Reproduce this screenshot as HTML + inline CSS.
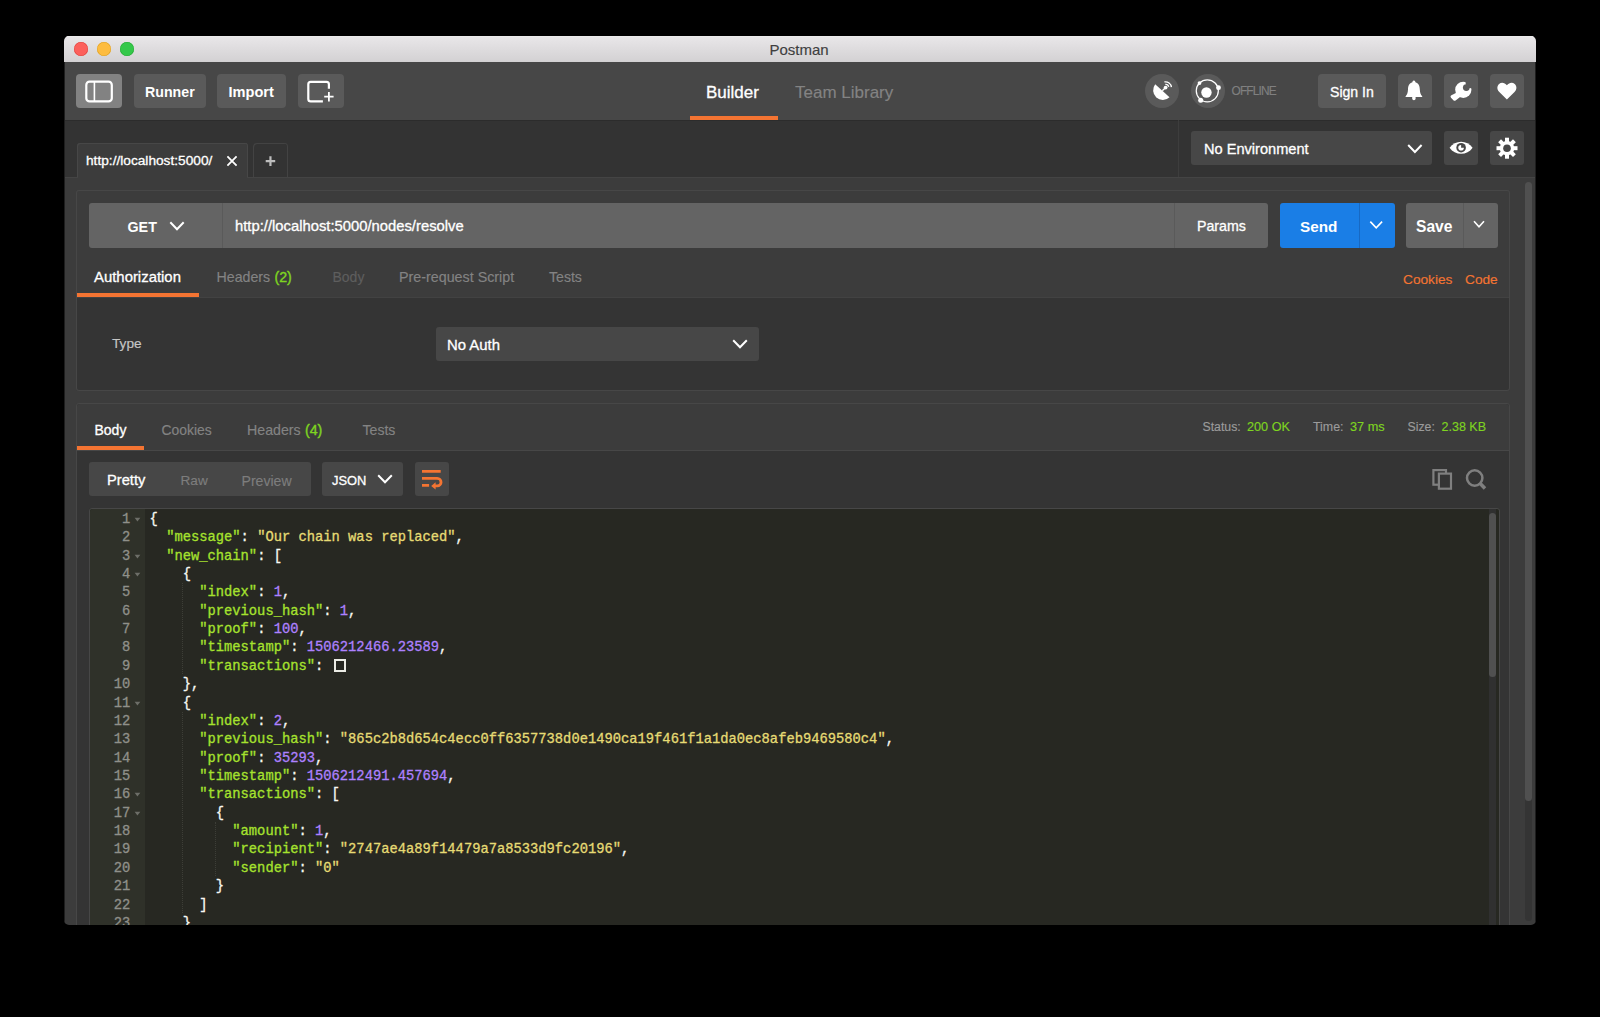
<!DOCTYPE html><html><head><meta charset="utf-8"><title>Postman</title><style>
html,body{margin:0;padding:0;background:#000;width:1600px;height:1017px;overflow:hidden;}
body{font-family:"Liberation Sans", sans-serif;}
#win{position:absolute;left:0;top:0;width:1600px;height:1017px;clip-path:inset(36px 64px 92px 64px round 5px);}
.a{position:absolute;display:block;}
.t{position:absolute;white-space:nowrap;line-height:1;}
.code{position:absolute;left:0;top:0;font-family:"Liberation Mono", monospace;font-size:13.79px;white-space:pre;-webkit-text-stroke-width:0.3px;}
</style></head><body><div id="win">
<div class="a" style="left:64px;top:36px;width:1472px;height:26px;background:linear-gradient(#e9e7e9,#d3d1d3);"></div>
<div class="a" style="left:64px;top:36px;width:1472px;height:1px;background:#ecebec;"></div>
<div class="a" style="left:73.8px;top:42.3px;width:14px;height:14px;border-radius:50%;background:#fc605c;box-shadow:inset 0 0 0 0.5px #e0443e;"></div>
<div class="a" style="left:96.5px;top:42.3px;width:14px;height:14px;border-radius:50%;background:#fdbc40;box-shadow:inset 0 0 0 0.5px #dea123;"></div>
<div class="a" style="left:119.7px;top:42.3px;width:14px;height:14px;border-radius:50%;background:#34c84a;box-shadow:inset 0 0 0 0.5px #27aa35;"></div>
<div class="t" style="left:769.5px;top:42.10px;font-size:15px;color:#3f3f3f;-webkit-text-stroke-width:0.15px;">Postman</div>
<div class="a" style="left:64px;top:62px;width:1472px;height:58px;background:#474747;"></div>
<div class="a" style="left:76px;top:74px;width:46px;height:34px;background:#828282;border-radius:4px;"></div>
<svg class="a" style="left:76px;top:74px;" width="46" height="34" viewBox="76 74 46 34"><rect x="86.3" y="81.7" width="25.5" height="19.7" rx="3.2" fill="none" stroke="#fff" stroke-width="2.2"/><line x1="94.4" y1="82" x2="94.4" y2="101" stroke="#fff" stroke-width="1.6"/></svg>
<div class="a" style="left:134px;top:74px;width:72px;height:34px;background:#5a5a5a;border-radius:4px;"></div>
<div class="t" style="left:145px;top:84.98px;font-size:14.2px;color:#fff;font-weight:700;">Runner</div>
<div class="a" style="left:217px;top:74px;width:69px;height:34px;background:#5a5a5a;border-radius:4px;"></div>
<div class="t" style="left:228.5px;top:84.64px;font-size:14.6px;color:#fff;font-weight:700;">Import</div>
<div class="a" style="left:298px;top:74px;width:46px;height:34px;background:#5a5a5a;border-radius:4px;"></div>
<svg class="a" style="left:298px;top:74px;" width="46" height="34" viewBox="298 74 46 34"><path d="M328.9 88.8 V84.3 A2.4 2.4 0 0 0 326.5 81.9 H310.7 A2.4 2.4 0 0 0 308.3 84.3 V98.9 A2.4 2.4 0 0 0 310.7 101.3 H322.9" fill="none" stroke="#fff" stroke-width="2.2"/><path d="M324.2 96.7 H333.6 M328.9 92 V101.4" stroke="#fff" stroke-width="1.8"/></svg>
<div class="t" style="left:706px;top:83.61px;font-size:17px;color:#fff;-webkit-text-stroke-width:0.3px;">Builder</div>
<div class="a" style="left:690px;top:116px;width:88px;height:4px;background:#f47432;"></div>
<div class="t" style="left:795px;top:83.61px;font-size:17px;color:#838383;-webkit-text-stroke-width:0.15px;">Team Library</div>
<div class="a" style="left:1145px;top:74px;width:34px;height:34px;border-radius:50%;background:#5a5a5a;"></div>
<svg class="a" style="left:1145px;top:74px;" width="34" height="34" viewBox="1145 74 34 34"><path d="M1155.2 84.3 L1169.5 97.2 A9.65 9.65 0 0 1 1155.2 84.3 Z" fill="#fff"/>
<path d="M1162.3 90.8 L1165.6 87.6" stroke="#fff" stroke-width="1.4"/><circle cx="1165.6" cy="87.6" r="1.9" fill="#fff"/>
<path d="M1165.31 84.31 A3.3 3.3 0 0 1 1168.79 86.75" fill="none" stroke="#fff" stroke-width="1.3"/>
<path d="M1164.39 81.93 A5.8 5.8 0 0 1 1171.38 87.09" fill="none" stroke="#fff" stroke-width="1.3"/></svg>
<div class="a" style="left:1191px;top:74px;width:34px;height:34px;border-radius:50%;background:#5a5a5a;"></div>
<svg class="a" style="left:1191px;top:74px;" width="34" height="34" viewBox="1191 74 34 34"><circle cx="1207.3" cy="90.8" r="11.05" fill="none" stroke="#fff" stroke-width="1.25"/>
<circle cx="1206.45" cy="92.5" r="5.2" fill="#fff"/><circle cx="1199.5" cy="83.1" r="1.9" fill="#fff"/>
<circle cx="1218.5" cy="87.7" r="2.4" fill="#fff"/><circle cx="1200.7" cy="100.3" r="2.5" fill="#fff"/></svg>
<div class="t" style="left:1231.5px;top:86.42px;font-size:11.9px;color:#808080;-webkit-text-stroke-width:0.15px;letter-spacing:-0.85px;">OFFLINE</div>
<div class="a" style="left:1318px;top:74px;width:68px;height:34px;background:#5a5a5a;border-radius:4px;"></div>
<div class="t" style="left:1330px;top:85.06px;font-size:14.1px;color:#fff;-webkit-text-stroke-width:0.3px;">Sign In</div>
<div class="a" style="left:1398px;top:74px;width:34px;height:34px;background:#5a5a5a;border-radius:4px;"></div>
<svg class="a" style="left:1398px;top:74px;" width="34" height="34" viewBox="1398 74 34 34"><path d="M1413.9 80.6 C1415.2 80.6 1415.3 81.8 1415.4 82.3 C1418.6 83.2 1419.6 85.8 1419.8 89.2 C1420 93 1420.6 94.6 1422.2 96.2 L1422.2 97 L1405.6 97 L1405.6 96.2 C1407.2 94.6 1407.8 93 1408 89.2 C1408.2 85.8 1409.2 83.2 1412.4 82.3 C1412.5 81.8 1412.6 80.6 1413.9 80.6 Z" fill="#fff"/>
<path d="M1412.2 97 L1415.6 97 L1415.6 98.6 A1.7 1.7 0 0 1 1412.2 98.6 Z" fill="#fff"/></svg>
<div class="a" style="left:1444px;top:74px;width:34px;height:34px;background:#5a5a5a;border-radius:4px;"></div>
<svg class="a" style="left:1444px;top:74px;" width="34" height="34" viewBox="1444 74 34 34"><defs><mask id="wm" maskUnits="userSpaceOnUse" x="1444" y="74" width="34" height="34"><rect x="1444" y="74" width="34" height="34" fill="#fff"/><circle cx="1466.3" cy="87.6" r="3.4" fill="#000"/><path d="M1466.3 87.6 L1464.6 76 L1480 76 L1480 89.6 Z" fill="#000"/></mask></defs>
<g mask="url(#wm)"><circle cx="1463.3" cy="89.8" r="8.1" fill="#fff"/></g>
<path d="M1460.2 90.8 L1463.6 94.2 L1455.6 100.4 A1.6 1.6 0 0 1 1453.4 100.2 L1451 97.8 A1.6 1.6 0 0 1 1451 95.6 Z" fill="#fff"/></svg>
<div class="a" style="left:1490px;top:74px;width:34px;height:34px;background:#5a5a5a;border-radius:4px;"></div>
<svg class="a" style="left:1490px;top:74px;" width="34" height="34" viewBox="1490 74 34 34"><path d="M1506.9 99.6 L1499.3 92 C1496.6 89.3 1496.9 85.7 1499.1 83.9 C1501.4 82 1504.8 82.5 1506.9 85.3 C1509 82.5 1512.4 82 1514.7 83.9 C1516.9 85.7 1517.2 89.3 1514.5 92 Z" fill="#fff"/></svg>
<div class="a" style="left:64px;top:120px;width:1472px;height:57px;background:#333333;"></div>
<div class="a" style="left:64px;top:120px;width:1472px;height:1px;background:#2c2c2c;"></div>
<div class="a" style="left:77px;top:143px;width:171px;height:35px;background:#3c3c3c;border-radius:3px 3px 0 0;box-shadow:inset 1px 1px 0 #474747, inset -1px 0 0 #474747;"></div>
<div class="t" style="left:86px;top:154.10px;font-size:13.7px;color:#fff;-webkit-text-stroke-width:0.3px;">http://localhost:5000/</div>
<svg class="a" style="left:225px;top:154px;" width="14" height="14" viewBox="225 154 14 14"><path d="M227.4 156.4 L236.6 165.6 M236.6 156.4 L227.4 165.6" stroke="#fff" stroke-width="1.8"/></svg>
<div class="a" style="left:253px;top:143px;width:35px;height:35px;background:#333333;border-radius:4px 4px 0 0;box-shadow:inset 1px 1px 0 #434343, inset -1px 0 0 #434343;"></div>
<svg class="a" style="left:262px;top:153px;" width="16" height="16" viewBox="262 153 16 16"><path d="M265.7 161.1 H275.2 M270.45 156.3 V165.9" stroke="#bdbdbd" stroke-width="2.2"/></svg>
<div class="a" style="left:1178px;top:120px;width:1px;height:57px;background:#3d3d3d;"></div>
<div class="a" style="left:1191px;top:131px;width:241px;height:34px;background:#474747;border-radius:3px;"></div>
<div class="t" style="left:1204px;top:141.64px;font-size:14.6px;color:#fff;-webkit-text-stroke-width:0.3px;">No Environment</div>
<svg class="a" style="left:1405px;top:142px;" width="20" height="14" viewBox="1405 142 20 14"><path d="M1408.2 145 L1414.9 152 L1421.6 145" fill="none" stroke="#fff" stroke-width="2"/></svg>
<div class="a" style="left:1444px;top:131px;width:34px;height:34px;background:#474747;border-radius:3px;"></div>
<svg class="a" style="left:1444px;top:131px;" width="34" height="34" viewBox="1444 131 34 34"><path d="M1449.6 147.7 C1455 139.6 1467.2 139.6 1472.6 147.7 C1467.2 155.8 1455 155.8 1449.6 147.7 Z" fill="#fff"/>
<circle cx="1461.1" cy="147.7" r="4.8" fill="#474747"/><circle cx="1461.1" cy="147.7" r="2.8" fill="#fff"/>
<path d="M1461.1 147.7 V144.6 A3.1 3.1 0 0 1 1464.2 147.7 Z" fill="#474747"/></svg>
<div class="a" style="left:1490px;top:131px;width:34px;height:34px;background:#474747;border-radius:3px;"></div>
<svg class="a" style="left:1490px;top:131px;" width="34" height="34" viewBox="1490 131 34 34"><rect x="1505.0" y="137.7" width="4.0" height="10.5" fill="#fff" transform="rotate(0.0 1507 148.2)"/><rect x="1505.0" y="137.7" width="4.0" height="10.5" fill="#fff" transform="rotate(45.0 1507 148.2)"/><rect x="1505.0" y="137.7" width="4.0" height="10.5" fill="#fff" transform="rotate(90.0 1507 148.2)"/><rect x="1505.0" y="137.7" width="4.0" height="10.5" fill="#fff" transform="rotate(135.0 1507 148.2)"/><rect x="1505.0" y="137.7" width="4.0" height="10.5" fill="#fff" transform="rotate(180.0 1507 148.2)"/><rect x="1505.0" y="137.7" width="4.0" height="10.5" fill="#fff" transform="rotate(225.0 1507 148.2)"/><rect x="1505.0" y="137.7" width="4.0" height="10.5" fill="#fff" transform="rotate(270.0 1507 148.2)"/><rect x="1505.0" y="137.7" width="4.0" height="10.5" fill="#fff" transform="rotate(315.0 1507 148.2)"/><circle cx="1507" cy="148.2" r="7.3" fill="#fff"/><circle cx="1507" cy="148.2" r="3.8" fill="#474747"/></svg>
<div class="a" style="left:64px;top:177px;width:1472px;height:748px;background:#3c3c3c;"></div>
<div class="a" style="left:64px;top:177px;width:1472px;height:1px;background:#444444;"></div>
<div class="a" style="left:78px;top:177px;width:169px;height:1px;background:#3c3c3c;"></div>
<div class="a" style="left:1525px;top:700px;width:7px;height:221px;background:#343434;border-radius:3.5px;"></div>
<div class="a" style="left:1525px;top:182px;width:7px;height:619px;background:#505050;border-radius:3.5px;"></div>
<div class="a" style="left:76px;top:190px;width:1434px;height:201px;background:#3c3c3c;border-radius:3px;box-shadow:inset 0 0 0 1px #474747;"></div>
<div class="a" style="left:89px;top:203px;width:1179px;height:45px;background:#646464;border-radius:3px;"></div>
<div class="a" style="left:222px;top:203px;width:1px;height:45px;background:#5a5a5a;"></div>
<div class="a" style="left:1174px;top:203px;width:1px;height:45px;background:#5a5a5a;"></div>
<div class="t" style="left:127.5px;top:219.89px;font-size:14.3px;color:#fff;font-weight:700;">GET</div>
<svg class="a" style="left:166px;top:218px;" width="22" height="16" viewBox="166 218 22 16"><path d="M170.3 222.2 L177 229.2 L183.7 222.2" fill="none" stroke="#fff" stroke-width="2"/></svg>
<div class="t" style="left:235px;top:219.27px;font-size:14.8px;color:#fff;-webkit-text-stroke-width:0.3px;">http://localhost:5000/nodes/resolve</div>
<div class="t" style="left:1197px;top:219.48px;font-size:14.2px;color:#fff;-webkit-text-stroke-width:0.3px;">Params</div>
<div class="a" style="left:1280px;top:203px;width:115px;height:45px;background:#1a7ee6;border-radius:3px;"></div>
<div class="a" style="left:1359px;top:203px;width:1px;height:45px;background:#1769c4;"></div>
<div class="t" style="left:1300px;top:219.25px;font-size:15.3px;color:#fff;font-weight:700;">Send</div>
<svg class="a" style="left:1366px;top:216px;" width="20" height="16" viewBox="1366 216 20 16"><path d="M1370.3 221.6 L1376.2 227.8 L1382.1 221.6" fill="none" stroke="#fff" stroke-width="1.6"/></svg>
<div class="a" style="left:1406px;top:203px;width:92px;height:45px;background:#646464;border-radius:3px;"></div>
<div class="a" style="left:1463px;top:203px;width:1px;height:45px;background:#5a5a5a;"></div>
<div class="t" style="left:1416px;top:218.99px;font-size:15.6px;color:#fff;font-weight:700;">Save</div>
<svg class="a" style="left:1469px;top:216px;" width="20" height="16" viewBox="1469 216 20 16"><path d="M1474 221.2 L1479 226.8 L1484 221.2" fill="none" stroke="#fff" stroke-width="1.6"/></svg>
<div class="t" style="left:94px;top:270.18px;font-size:14.9px;color:#fff;-webkit-text-stroke-width:0.3px;">Authorization</div>
<div class="a" style="left:77px;top:293px;width:122px;height:4px;background:#f47432;"></div>
<div class="t" style="left:216.5px;top:269.98px;font-size:14.2px;color:#838383;-webkit-text-stroke-width:0.15px;">Headers</div>
<div class="t" style="left:274.5px;top:269.98px;font-size:14.2px;color:#7ed321;-webkit-text-stroke-width:0.4px;">(2)</div>
<div class="t" style="left:332.5px;top:270.15px;font-size:14.0px;color:#5e5e5e;-webkit-text-stroke-width:0.15px;">Body</div>
<div class="t" style="left:399px;top:269.89px;font-size:14.3px;color:#838383;-webkit-text-stroke-width:0.15px;">Pre-request Script</div>
<div class="t" style="left:549px;top:270.06px;font-size:14.1px;color:#838383;-webkit-text-stroke-width:0.15px;">Tests</div>
<div class="t" style="left:1403px;top:273.40px;font-size:13.7px;color:#f47432;-webkit-text-stroke-width:0.15px;">Cookies</div>
<div class="t" style="left:1465px;top:273.40px;font-size:13.7px;color:#f47432;-webkit-text-stroke-width:0.15px;">Code</div>
<div class="a" style="left:76px;top:297px;width:1434px;height:94px;background:#343434;border-radius:0 0 3px 3px;box-shadow:inset 0 0 0 1px #474747;"></div>
<div class="a" style="left:77px;top:297px;width:1432px;height:1px;background:#424242;"></div>
<div class="t" style="left:112px;top:336.60px;font-size:13.7px;color:#c6c6c6;-webkit-text-stroke-width:0.15px;">Type</div>
<div class="a" style="left:436px;top:327px;width:323px;height:34px;background:#474747;border-radius:3px;"></div>
<div class="t" style="left:447px;top:337.68px;font-size:14.9px;color:#fff;-webkit-text-stroke-width:0.3px;">No Auth</div>
<svg class="a" style="left:729px;top:336px;" width="22" height="16" viewBox="729 336 22 16"><path d="M733.2 340.2 L740 347.2 L746.8 340.2" fill="none" stroke="#fff" stroke-width="2"/></svg>
<div class="a" style="left:76px;top:403px;width:1434px;height:537px;background:#343434;border-radius:3px;box-shadow:inset 0 0 0 1px #474747;"></div>
<div class="a" style="left:77px;top:404px;width:1432px;height:46px;background:#3c3c3c;border-radius:3px 3px 0 0;"></div>
<div class="a" style="left:77px;top:450px;width:1432px;height:1px;background:#474747;"></div>
<div class="t" style="left:94.5px;top:422.95px;font-size:14.0px;color:#fff;-webkit-text-stroke-width:0.3px;">Body</div>
<div class="a" style="left:77px;top:446px;width:67px;height:4px;background:#f47432;"></div>
<div class="t" style="left:161.5px;top:423.63px;font-size:13.9px;color:#838383;-webkit-text-stroke-width:0.15px;">Cookies</div>
<div class="t" style="left:247px;top:423.38px;font-size:14.2px;color:#838383;-webkit-text-stroke-width:0.15px;">Headers</div>
<div class="t" style="left:305px;top:423.38px;font-size:14.2px;color:#7ed321;-webkit-text-stroke-width:0.4px;">(4)</div>
<div class="t" style="left:362.5px;top:423.46px;font-size:14.1px;color:#838383;-webkit-text-stroke-width:0.15px;">Tests</div>
<div class="t" style="left:1202.5px;top:421.29px;font-size:12.3px;color:#9b9b9b;-webkit-text-stroke-width:0.15px;">Status:</div>
<div class="t" style="left:1247px;top:420.95px;font-size:12.7px;color:#7ed321;-webkit-text-stroke-width:0.15px;">200 OK</div>
<div class="t" style="left:1313px;top:421.20px;font-size:12.4px;color:#9b9b9b;-webkit-text-stroke-width:0.15px;">Time:</div>
<div class="t" style="left:1350px;top:420.95px;font-size:12.7px;color:#7ed321;-webkit-text-stroke-width:0.15px;">37 ms</div>
<div class="t" style="left:1407.5px;top:421.29px;font-size:12.3px;color:#9b9b9b;-webkit-text-stroke-width:0.15px;">Size:</div>
<div class="t" style="left:1441.5px;top:421.12px;font-size:12.5px;color:#7ed321;-webkit-text-stroke-width:0.15px;">2.38 KB</div>
<div class="a" style="left:89px;top:462px;width:222px;height:34px;background:#474747;border-radius:3px;"></div>
<div class="t" style="left:107px;top:473.15px;font-size:14.7px;color:#fff;-webkit-text-stroke-width:0.3px;">Pretty</div>
<div class="t" style="left:180.5px;top:474.08px;font-size:13.6px;color:#7d7d7d;-webkit-text-stroke-width:0.15px;">Raw</div>
<div class="t" style="left:241.5px;top:473.66px;font-size:14.1px;color:#7d7d7d;-webkit-text-stroke-width:0.15px;">Preview</div>
<div class="a" style="left:322px;top:462px;width:81px;height:34px;background:#474747;border-radius:3px;"></div>
<div class="t" style="left:332px;top:474.68px;font-size:12.9px;color:#fff;-webkit-text-stroke-width:0.3px;">JSON</div>
<svg class="a" style="left:374px;top:471px;" width="22" height="16" viewBox="374 471 22 16"><path d="M378.2 475.2 L385 482.2 L391.8 475.2" fill="none" stroke="#fff" stroke-width="2"/></svg>
<div class="a" style="left:415px;top:462px;width:34px;height:34px;background:#474747;border-radius:3px;"></div>
<svg class="a" style="left:415px;top:462px;" width="34" height="34" viewBox="415 462 34 34"><path d="M422 471.3 H440.7 M422 478.4 H437.3 A3.75 3.75 0 0 1 437.3 485.9 H434 M422 485.4 H429.1" fill="none" stroke="#f47432" stroke-width="2.8"/>
<path d="M431.2 485.9 L435.6 482.2 L435.6 489.6 Z" fill="#f47432"/></svg>
<svg class="a" style="left:1430px;top:467px;" width="26" height="26" viewBox="1430 467 26 26"><rect x="1433.4" y="470.1" width="12.6" height="14.6" fill="none" stroke="#7f7f7f" stroke-width="2.2"/>
<rect x="1438.9" y="473.6" width="12.1" height="15.1" fill="#343434" stroke="#7f7f7f" stroke-width="2.2"/></svg>
<svg class="a" style="left:1462px;top:466px;" width="28" height="28" viewBox="1462 466 28 28"><circle cx="1474.7" cy="478" r="7.7" fill="none" stroke="#7f7f7f" stroke-width="2.5"/>
<path d="M1480.2 483.6 L1485 488.4" stroke="#7f7f7f" stroke-width="3.6"/></svg>
<div class="a" style="left:89px;top:508px;width:1411px;height:432px;background:#272822;border-radius:3px;box-shadow:inset 0 0 0 1px #474747;"></div>
<div class="a" style="left:90px;top:509px;width:55px;height:431px;background:#2f3129;border-radius:3px 0 0 0;"></div>
<div class="a" style="left:1489px;top:509px;width:7px;height:416px;background:#303030;"></div>
<div class="a" style="left:1489px;top:513px;width:7px;height:164px;background:#505050;border-radius:3.5px;"></div>
<div class="a" style="left:64px;top:62px;width:1px;height:863px;background:#1e1e1e;"></div>
<div class="a" style="left:1535px;top:62px;width:1px;height:863px;background:#1e1e1e;"></div>
<div class="a" style="left:89px;top:508px;width:1400px;height:417px;overflow:hidden;">
<div class="a" style="left:92.7px;top:74.9px;width:0;height:91.4px;border-left:1px dotted #3d3e37;"></div>
<div class="a" style="left:92.7px;top:203.5px;width:0;height:201.6px;border-left:1px dotted #3d3e37;"></div>
<div class="a" style="left:125.8px;top:313.6px;width:0;height:54.7px;border-left:1px dotted #3d3e37;"></div>
<div class="code" style="left:60.60px;top:3.94px;font-size:13.79px;color:#f8f8f2;">{</div>
<div class="code" style="left:32.92px;top:3.94px;font-size:13.79px;color:#8f908a;">1</div>
<svg class="a" style="left:45px;top:9.0px" width="7" height="5" viewBox="0 0 7 5"><path d="M0.6 0.8 H6.3 L3.45 4.4 Z" fill="#6d6e68"/></svg>
<div class="code" style="left:60.60px;top:22.30px;font-size:13.79px;color:#f8f8f2;">  <span style="color:#a6e22e">"message"</span>: <span style="color:#e6db74">"Our chain was replaced"</span>,</div>
<div class="code" style="left:32.92px;top:22.30px;font-size:13.79px;color:#8f908a;">2</div>
<div class="code" style="left:60.60px;top:40.66px;font-size:13.79px;color:#f8f8f2;">  <span style="color:#a6e22e">"new_chain"</span>: [</div>
<div class="code" style="left:32.92px;top:40.66px;font-size:13.79px;color:#8f908a;">3</div>
<svg class="a" style="left:45px;top:45.7px" width="7" height="5" viewBox="0 0 7 5"><path d="M0.6 0.8 H6.3 L3.45 4.4 Z" fill="#6d6e68"/></svg>
<div class="code" style="left:60.60px;top:59.02px;font-size:13.79px;color:#f8f8f2;">    {</div>
<div class="code" style="left:32.92px;top:59.02px;font-size:13.79px;color:#8f908a;">4</div>
<svg class="a" style="left:45px;top:64.1px" width="7" height="5" viewBox="0 0 7 5"><path d="M0.6 0.8 H6.3 L3.45 4.4 Z" fill="#6d6e68"/></svg>
<div class="code" style="left:60.60px;top:77.38px;font-size:13.79px;color:#f8f8f2;">      <span style="color:#a6e22e">"index"</span>: <span style="color:#ae81ff">1</span>,</div>
<div class="code" style="left:32.92px;top:77.38px;font-size:13.79px;color:#8f908a;">5</div>
<div class="code" style="left:60.60px;top:95.74px;font-size:13.79px;color:#f8f8f2;">      <span style="color:#a6e22e">"previous_hash"</span>: <span style="color:#ae81ff">1</span>,</div>
<div class="code" style="left:32.92px;top:95.74px;font-size:13.79px;color:#8f908a;">6</div>
<div class="code" style="left:60.60px;top:114.10px;font-size:13.79px;color:#f8f8f2;">      <span style="color:#a6e22e">"proof"</span>: <span style="color:#ae81ff">100</span>,</div>
<div class="code" style="left:32.92px;top:114.10px;font-size:13.79px;color:#8f908a;">7</div>
<div class="code" style="left:60.60px;top:132.46px;font-size:13.79px;color:#f8f8f2;">      <span style="color:#a6e22e">"timestamp"</span>: <span style="color:#ae81ff">1506212466.23589</span>,</div>
<div class="code" style="left:32.92px;top:132.46px;font-size:13.79px;color:#8f908a;">8</div>
<div class="code" style="left:60.60px;top:150.82px;font-size:13.79px;color:#f8f8f2;">      <span style="color:#a6e22e">"transactions"</span>: <span style="display:inline-block;width:8.25px;"></span><span style="display:inline-block;width:8.25px;"></span></div>
<div class="code" style="left:32.92px;top:150.82px;font-size:13.79px;color:#8f908a;">9</div>
<div class="code" style="left:60.60px;top:169.18px;font-size:13.79px;color:#f8f8f2;">    },</div>
<div class="code" style="left:24.65px;top:169.18px;font-size:13.79px;color:#8f908a;">10</div>
<div class="code" style="left:60.60px;top:187.54px;font-size:13.79px;color:#f8f8f2;">    {</div>
<div class="code" style="left:24.65px;top:187.54px;font-size:13.79px;color:#8f908a;">11</div>
<svg class="a" style="left:45px;top:192.6px" width="7" height="5" viewBox="0 0 7 5"><path d="M0.6 0.8 H6.3 L3.45 4.4 Z" fill="#6d6e68"/></svg>
<div class="code" style="left:60.60px;top:205.90px;font-size:13.79px;color:#f8f8f2;">      <span style="color:#a6e22e">"index"</span>: <span style="color:#ae81ff">2</span>,</div>
<div class="code" style="left:24.65px;top:205.90px;font-size:13.79px;color:#8f908a;">12</div>
<div class="code" style="left:60.60px;top:224.26px;font-size:13.79px;color:#f8f8f2;">      <span style="color:#a6e22e">"previous_hash"</span>: <span style="color:#e6db74">"865c2b8d654c4ecc0ff6357738d0e1490ca19f461f1a1da0ec8afeb9469580c4"</span>,</div>
<div class="code" style="left:24.65px;top:224.26px;font-size:13.79px;color:#8f908a;">13</div>
<div class="code" style="left:60.60px;top:242.62px;font-size:13.79px;color:#f8f8f2;">      <span style="color:#a6e22e">"proof"</span>: <span style="color:#ae81ff">35293</span>,</div>
<div class="code" style="left:24.65px;top:242.62px;font-size:13.79px;color:#8f908a;">14</div>
<div class="code" style="left:60.60px;top:260.98px;font-size:13.79px;color:#f8f8f2;">      <span style="color:#a6e22e">"timestamp"</span>: <span style="color:#ae81ff">1506212491.457694</span>,</div>
<div class="code" style="left:24.65px;top:260.98px;font-size:13.79px;color:#8f908a;">15</div>
<div class="code" style="left:60.60px;top:279.34px;font-size:13.79px;color:#f8f8f2;">      <span style="color:#a6e22e">"transactions"</span>: [</div>
<div class="code" style="left:24.65px;top:279.34px;font-size:13.79px;color:#8f908a;">16</div>
<svg class="a" style="left:45px;top:284.4px" width="7" height="5" viewBox="0 0 7 5"><path d="M0.6 0.8 H6.3 L3.45 4.4 Z" fill="#6d6e68"/></svg>
<div class="code" style="left:60.60px;top:297.70px;font-size:13.79px;color:#f8f8f2;">        {</div>
<div class="code" style="left:24.65px;top:297.70px;font-size:13.79px;color:#8f908a;">17</div>
<svg class="a" style="left:45px;top:302.8px" width="7" height="5" viewBox="0 0 7 5"><path d="M0.6 0.8 H6.3 L3.45 4.4 Z" fill="#6d6e68"/></svg>
<div class="code" style="left:60.60px;top:316.06px;font-size:13.79px;color:#f8f8f2;">          <span style="color:#a6e22e">"amount"</span>: <span style="color:#ae81ff">1</span>,</div>
<div class="code" style="left:24.65px;top:316.06px;font-size:13.79px;color:#8f908a;">18</div>
<div class="code" style="left:60.60px;top:334.42px;font-size:13.79px;color:#f8f8f2;">          <span style="color:#a6e22e">"recipient"</span>: <span style="color:#e6db74">"2747ae4a89f14479a7a8533d9fc20196"</span>,</div>
<div class="code" style="left:24.65px;top:334.42px;font-size:13.79px;color:#8f908a;">19</div>
<div class="code" style="left:60.60px;top:352.78px;font-size:13.79px;color:#f8f8f2;">          <span style="color:#a6e22e">"sender"</span>: <span style="color:#e6db74">"0"</span></div>
<div class="code" style="left:24.65px;top:352.78px;font-size:13.79px;color:#8f908a;">20</div>
<div class="code" style="left:60.60px;top:371.14px;font-size:13.79px;color:#f8f8f2;">        }</div>
<div class="code" style="left:24.65px;top:371.14px;font-size:13.79px;color:#8f908a;">21</div>
<div class="code" style="left:60.60px;top:389.50px;font-size:13.79px;color:#f8f8f2;">      ]</div>
<div class="code" style="left:24.65px;top:389.50px;font-size:13.79px;color:#8f908a;">22</div>
<div class="code" style="left:60.60px;top:407.86px;font-size:13.79px;color:#f8f8f2;">    }</div>
<div class="code" style="left:24.65px;top:407.86px;font-size:13.79px;color:#8f908a;">23</div>
<div class="a" style="left:244.60000000000002px;top:150.60000000000002px;width:8.3px;height:9.9px;border:2.2px solid #ecece6;"></div>
</div>
</div></body></html>
